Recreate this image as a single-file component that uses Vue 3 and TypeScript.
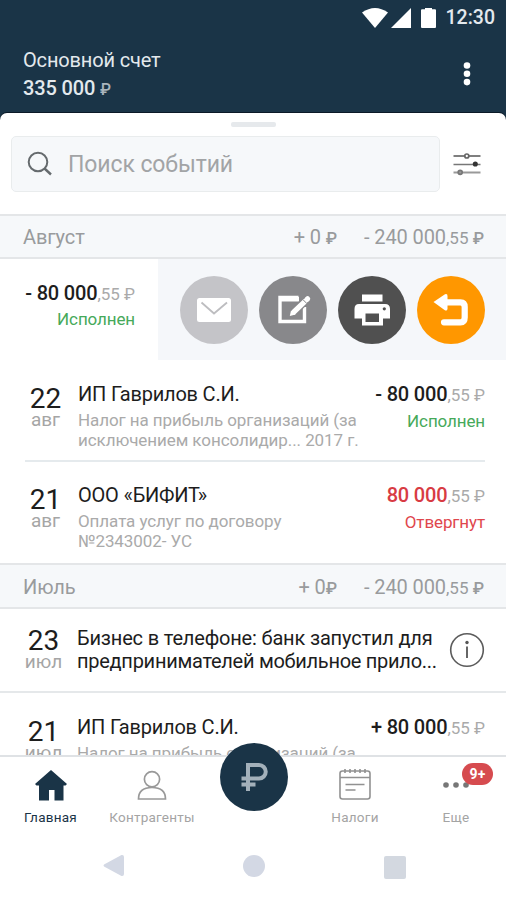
<script setup lang="ts">
interface Operation {
  day: string
  month: string
  title: string
  details: string[]
  sign: string
  amount: string
  status: string
  kind: 'done' | 'rejected'
}

const augustOperations: Operation[] = [
  {
    day: '22',
    month: 'авг',
    title: 'ИП Гаврилов С.И.',
    details: ['Налог на прибыль организаций (за', 'исключением консолидир... 2017 г.'],
    sign: '- ',
    amount: '80 000',
    status: 'Исполнен',
    kind: 'done',
  },
  {
    day: '21',
    month: 'авг',
    title: 'ООО «БИФИТ»',
    details: ['Оплата услуг по договору', '№2343002- УС'],
    sign: '',
    amount: '80 000',
    status: 'Отвергнут',
    kind: 'rejected',
  },
]
</script>

<template>
  <div class="screen">
    <header class="top">
      <div class="status-bar">
        <svg class="wifi" width="26" height="20" viewBox="0 0 26 20"><path d="M0 4.5Q13-4.500 26 4.500L13 20Z" fill="#fff" /></svg>
        <svg class="signal" width="20" height="20" viewBox="0 0 20 20"><path d="M20 0V20H0Z" fill="#fff" /></svg>
        <svg class="battery" width="15" height="20" viewBox="0 0 15 20"><path d="M4 0H11V1.200H14Q15 1.200 15 2.200V19Q15 20 14 20H1Q0 20 0 19V2.200Q0 1.200 1 1.200H4Z" fill="#fff" /></svg>
        <span class="clock">12:30</span>
      </div>
      <div class="account">
        <div>
          <div class="account-name">Основной счет</div>
          <div class="account-sum">335 000 <span class="rub">₽</span></div>
        </div>
        <svg class="kebab" width="8" height="26" viewBox="0 0 8 26"><g fill="#fff"><circle cx="4" cy="4.500" r="3.300" /><circle cx="4" cy="12.800" r="3.300" /><circle cx="4" cy="21.100" r="3.300" /></g></svg>
      </div>
    </header>

    <main class="sheet">
      <div class="handle"></div>
      <div class="search-row">
        <div class="search">
          <svg width="26" height="26" viewBox="0 0 26 26" fill="none" stroke="#666b6e" stroke-width="2"><circle cx="11" cy="11" r="9.300" /><path d="M17.500 17.500L24 23.500" stroke-width="2.400" /></svg>
          <span>Поиск событий</span>
        </div>
        <svg class="filters" width="28" height="24" viewBox="0 0 28 24" fill="none" stroke-width="1.700">
          <path d="M.5 4H11.500M16 4H27.500" stroke="#555" />
          <circle cx="13.800" cy="4" r="2" stroke="#666" />
          <path d="M.5 12.500H27.500" stroke="#777" />
          <circle cx="22.300" cy="12" r="1.700" stroke="#333" fill="#333" />
          <path d="M.5 20.500H27.500" stroke="#999" stroke-width="2.200" />
          <circle cx="7.200" cy="20.300" r="2" stroke="#777" fill="#999" />
        </svg>
      </div>

      <div class="period">
        <span>Август</span>
        <span class="income">+ 0 <span class="rub">₽</span></span>
        <span class="expense">- 240 000<span class="cents">,55 <span class="rub">₽</span></span></span>
      </div>

      <div class="swiped">
        <div class="swiped-card">
          <div class="sum">- 80 000<span class="cents">,55 <span class="rub">₽</span></span></div>
          <div class="status done">Исполнен</div>
        </div>
        <div class="actions">
          <button class="action mail">
            <svg width="68" height="68" viewBox="0 0 68 68"><rect x="17" y="22" width="34" height="24" rx="2.500" fill="#fff" /><path d="M21.500 26.500L34 37.500L47 26.500" fill="none" stroke="#bdbdc0" stroke-width="1.800" /></svg>
          </button>
          <button class="action edit">
            <svg width="68" height="68" viewBox="0 0 68 68"><path d="M39.500 21.500H21V45.500H45.500V31" fill="none" stroke="#fff" stroke-width="3.400" /><path d="M22 21H40V25.500H22Z" fill="#fff" /><path d="M33.500 37L47.800 23.500" stroke="#88888b" stroke-width="8" /><path d="M34.800 36L46 25.300M48 23.400L48.600 22.800" stroke="#fff" stroke-width="5.200" stroke-linecap="round" /><path d="M30.800 40L32 34.500L36.600 38.600Z" fill="#fff" /><path d="M44 23.700L48 27.700" stroke="#88888b" stroke-width="1" /></svg>
          </button>
          <button class="action print">
            <svg width="68" height="68" viewBox="0 0 68 68"><rect x="24" y="18.500" width="20.500" height="7" fill="#fff" /><path d="M21 28H47Q52 28 52 33V42.500H45V49.500H24V42.500H16.500V33Q16.500 28 21 28Z" fill="#fff" /><path d="M27.500 37.500H41V46H27.500Z" fill="#505050" /><circle cx="46.300" cy="32.800" r="1.600" fill="#505050" /></svg>
          </button>
          <button class="action undo">
            <svg width="68" height="68" viewBox="0 0 68 68"><path d="M27 26.300H43.500Q47.700 26.300 47.700 31V41.500Q47.700 46.300 43.500 46.300H27" fill="none" stroke="#fff" stroke-width="6.200" stroke-linecap="round" /><path d="M16.500 26L28 18.200Q30.500 17.200 30.500 20V33Q30 35.500 27.500 34Z" fill="#fff" /></svg>
          </button>
        </div>
      </div>

      <article v-for="(op, i) in augustOperations" :key="op.day" class="operation" :class="{ divided: i === 0 }">
        <div class="date"><span class="day">{{ op.day }}</span><span class="month">{{ op.month }}</span></div>
        <div class="info">
          <h3>{{ op.title }}</h3>
          <p v-for="line in op.details" :key="line">{{ line }}</p>
        </div>
        <div class="totals">
          <div class="sum" :class="op.kind">{{ op.sign }}{{ op.amount }}<span class="cents">,55 <span class="rub">₽</span></span></div>
          <div class="status" :class="op.kind">{{ op.status }}</div>
        </div>
      </article>

      <div class="period july">
        <span>Июль</span>
        <span class="income">+ 0<span class="rub">₽</span></span>
        <span class="expense">- 240 000<span class="cents">,55 <span class="rub">₽</span></span></span>
      </div>

      <article class="news">
        <div class="date"><span class="day">23</span><span class="month">июл</span></div>
        <p class="news-text"><span>Бизнес в телефоне: банк запустил для</span><span class="narrow">предпринимателей мобильное прило...</span></p>
        <svg class="about" width="36" height="36" viewBox="0 0 36 36"><circle cx="18" cy="18" r="16.300" fill="none" stroke="#5b5b5b" stroke-width="1.600" /><circle cx="18" cy="10.500" r="1.700" fill="#555" /><path d="M18 14.500V26" stroke="#666" stroke-width="2" /></svg>
      </article>

      <article class="operation last">
        <div class="date"><span class="day">21</span><span class="month">июл</span></div>
        <div class="info"><h3>ИП Гаврилов С.И.</h3><p>Налог на прибыль организаций (за</p></div>
        <div class="totals"><div class="sum">+ 80 000<span class="cents">,55 <span class="rub">₽</span></span></div></div>
      </article>
    </main>

    <nav class="tabs">
      <a class="tab home">
        <svg width="32" height="32" viewBox="0 0 32 32"><path d="M16 0L32 14L30.500 15.500H28.500V30.500H19.500V20H14V30.500H4V15.500H1.500L0 14Z" fill="#1a3447" /></svg>
        <span>Главная</span>
      </a>
      <a class="tab people">
        <svg width="32" height="32" viewBox="0 0 32 32" fill="none" stroke="#999" stroke-width="1.700"><circle cx="16" cy="9.300" r="7.600" /><path d="M2.500 29Q2.500 17.500 16 17.500Q29.500 17.500 29.500 29Z" /></svg>
        <span>Контрагенты</span>
      </a>
      <a class="pay">
        <svg width="28" height="30" viewBox="0 0 28 30" fill="none" stroke="#a3b0ba" stroke-width="4"><path d="M8 29V3H19A5.500 5.500 0 0 1 19 16.500H1.500M1.500 22.500H15.500" /></svg>
      </a>
      <a class="tab taxes">
        <svg width="34" height="34" viewBox="0 0 34 34" fill="none" stroke="#919191" stroke-width="1.600"><rect x="2" y="4" width="30" height="28" rx="2.500" /><path d="M2 10.500H32M7 2V6M12 2V6M17 2V6M22 2V6M27 2V6M7.500 17.500H26.500M7.500 23H17.500" /></svg>
        <span>Налоги</span>
      </a>
      <a class="tab more">
        <svg width="28" height="8" viewBox="0 0 28 8" fill="#777"><circle cx="4" cy="4" r="2.800" /><circle cx="14" cy="4" r="2.800" /><circle cx="24" cy="4" r="2.800" /></svg>
        <span>Еще</span>
        <b class="badge">9+</b>
      </a>
    </nav>

    <footer class="system">
      <svg width="22" height="24" viewBox="0 0 22 24"><path d="M1 10.500L18.500 1Q21 .5 21 3V20Q21 22.500 18.500 22L1 12.500Q0 11.500 1 10.500Z" fill="#d3d8e4" /></svg>
      <i class="round"></i>
      <i class="square"></i>
    </footer>
  </div>
</template>

<style>
body {
  background: #fff;
}
</style>

<style scoped>
.screen {
  width: 506px;
  height: 900px;
  display: flex;
  flex-direction: column;
  overflow: hidden;
  background: #1a3447;
  font-family: Roboto, sans-serif;
  color: #1d1d1d;
}
.top {
  height: 113px;
  flex: none;
  color: #e3e9ed;
}
.status-bar {
  height: 36px;
  display: flex;
  align-items: center;
  justify-content: flex-end;
  padding-right: 11px;
}
.signal {
  margin-left: 3px;
}
.battery {
  margin: 0 10px 0 10px;
}
.clock {
  font-size: 19.5px;
  font-weight: 500;
  line-height: 36px;
}
.account {
  display: flex;
  justify-content: space-between;
  padding: 10px 35px 0 23px;
}
.account-name,
.account-sum {
  font-size: 20px;
  line-height: 28px;
  letter-spacing: -0.15px;
}
.account-sum {
  font-weight: 500;
}
.account-sum .rub {
  font-size: 16px;
  font-weight: 500;
  color: #aab5bd;
}
.kebab {
  margin-top: 15px;
}
.sheet {
  height: 642px;
  flex: none;
  overflow: hidden;
  background: #fff;
  border-radius: 7px 7px 0 0;
  box-shadow: 0 -1px 0 #0b1a27;
}
.handle {
  width: 45px;
  height: 5px;
  margin: 9px auto 9px;
  border-radius: 2px;
  background: #e6e9ec;
}
.search-row {
  display: flex;
  align-items: center;
  height: 56px;
  margin-bottom: 22px;
  padding-left: 11px;
}
.search {
  box-sizing: border-box;
  width: 429px;
  height: 56px;
  display: flex;
  align-items: center;
  gap: 15px;
  padding-left: 15px;
  background: #f6f8fa;
  border: 1px solid #e9eced;
  border-radius: 5px;
  color: #a2a4a6;
  font-size: 23px;
  letter-spacing: -0.1px;
}
.filters {
  margin-left: 13px;
}
.period {
  box-sizing: border-box;
  height: 45px;
  display: flex;
  align-items: center;
  padding: 0 22px 0 23px;
  background: #f6f8fa;
  border-top: 2px solid #e4e6e8;
  border-bottom: 2px solid #e4e6e8;
  color: #999b9d;
  font-size: 20px;
  letter-spacing: -0.1px;
}
.period.july {
  height: 46px;
  padding-top: 1px;
}
.income {
  margin-left: auto;
}
.expense {
  margin-left: 27px;
}
.cents {
  color: #aaa;
  font-size: 17px;
  font-weight: 400;
  letter-spacing: 0;
}
.period .cents {
  color: inherit;
}
.rub {
  font-size: 16.5px;
}
.period .rub {
  font-weight: 500;
}
.swiped {
  display: flex;
  height: 101px;
  background: #f5f7fa;
}
.swiped-card {
  box-sizing: border-box;
  width: 158px;
  padding: 22px 23px 0 0;
  background: #fff;
  text-align: right;
}
.sum {
  height: 25px;
  line-height: 25px;
  font-size: 20px;
  font-weight: 500;
  letter-spacing: -0.18px;
  white-space: nowrap;
}
.sum.rejected {
  color: #d83b43;
}
.status {
  font-size: 17px;
  line-height: 27px;
  letter-spacing: -0.12px;
}
.operation .status {
  line-height: 28px;
}
.status.done {
  color: #46a95a;
}
.status.rejected {
  color: #df474d;
}
.actions {
  display: flex;
  gap: 11px;
  padding: 17px 0 0 22px;
}
.action {
  width: 68px;
  height: 68px;
  padding: 0;
  border: 0;
  border-radius: 50%;
}
.action svg {
  display: block;
}
.mail {
  background: #c4c4c8;
}
.edit {
  background: #88888b;
}
.print {
  background: #505050;
}
.undo {
  background: #ff9700;
}
.operation {
  position: relative;
  box-sizing: border-box;
  height: 101px;
  display: flex;
  padding: 22px 21px 0 0;
}
.operation.divided + .operation {
  height: 102px;
}
.operation.divided::after {
  content: '';
  position: absolute;
  left: 25px;
  right: 21px;
  bottom: -1px;
  height: 2px;
  background: #e5eaed;
}
.date {
  width: 78px;
  padding-left: 13px;
  box-sizing: border-box;
  display: flex;
  flex-direction: column;
  align-items: center;
  flex: none;
}
.day {
  font-size: 28px;
  line-height: 33px;
}
.month {
  margin-top: -6px;
  color: #a5a5a5;
  font-size: 19px;
  line-height: 22px;
}
h3,
p {
  margin: 0;
  font-weight: 400;
  white-space: nowrap;
}
h3 {
  height: 29px;
  font-size: 20px;
  line-height: 25px;
  letter-spacing: -0.2px;
}
.info p {
  color: #aaa;
  font-size: 17px;
  line-height: 19.5px;
  letter-spacing: -0.08px;
}
.totals {
  margin-left: auto;
  text-align: right;
}
.news {
  box-sizing: border-box;
  display: flex;
  height: 84px;
  padding: 15px 21px 0 0;
  border-bottom: 2px solid #e5e8ea;
}
.news .date,
.last .date {
  width: 77px;
  padding-left: 10px;
}
.news-text {
  flex: 1;
  display: flex;
  flex-direction: column;
  padding-top: 3px;
  font-size: 20px;
  line-height: 23px;
  letter-spacing: -0.17px;
}
.news-text .narrow {
  letter-spacing: -0.27px;
}
.about {
  margin-top: 8px;
}
.tabs {
  position: relative;
  box-sizing: border-box;
  height: 80px;
  flex: none;
  display: grid;
  grid-template-columns: 101px 102px 101px 102px 100px;
  background: #fff;
  border-top: 2px solid #dfe2e5;
}
.tab {
  position: relative;
  display: flex;
  flex-direction: column;
  align-items: center;
  color: #a4a4a4;
  font-size: 13.5px;
  letter-spacing: 0.25px;
}
.tab span {
  position: absolute;
  top: 51px;
  line-height: 18px;
}
.home svg,
.people svg {
  margin-top: 13px;
}
.home {
  color: #1a3447;
}
.taxes svg {
  margin-top: 10px;
}
.more svg {
  margin-top: 24px;
}
.pay {
  position: relative;
  top: -14px;
  justify-self: center;
  width: 68px;
  height: 68px;
  display: flex;
  align-items: center;
  justify-content: center;
  border-radius: 50%;
  background: #1a3447;
}
.badge {
  position: absolute;
  top: 6px;
  left: 56px;
  width: 31px;
  height: 22px;
  border-radius: 11px;
  background: #d64b4f;
  color: #fff;
  font-size: 14px;
  line-height: 22px;
  text-align: center;
}
.system {
  flex: 1;
  display: flex;
  background: #fff;
  padding: 19px 0 0 103px;
}
.round {
  width: 22px;
  height: 22px;
  margin: 1px 0 0 118px;
  border-radius: 50%;
  background: #d3d8e4;
}
.square {
  width: 22px;
  height: 23px;
  margin: 2px 0 0 119px;
  border-radius: 2px;
  background: #d3d8e0;
}
</style>
